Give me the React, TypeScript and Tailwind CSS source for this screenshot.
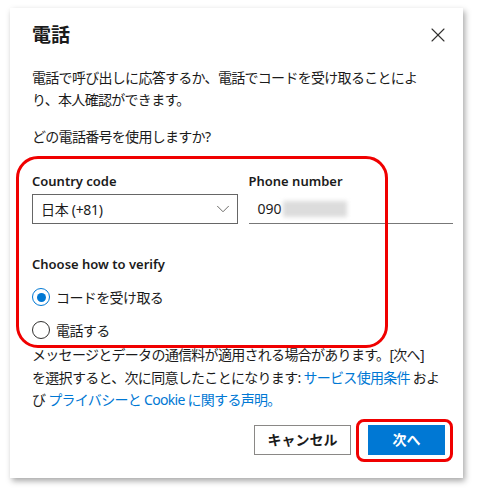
import { X, ChevronDown } from "lucide-react";

const JP = "font-['Noto_Sans','Noto_Sans_CJK_JP',sans-serif]";

function Radio({ checked, label }: { checked?: boolean; label: string }) {
    return (
        <div className="flex items-center h-[24px] gap-[6px]">
            <span
                className={
                    "flex h-[18px] w-[18px] items-center justify-center rounded-full border bg-white " +
                    (checked ? "border-[#0078d4] border-[1.5px]" : "border-[#323130]")
                }
            >
                {checked && <span className="h-[9px] w-[9px] rounded-full bg-[#0078d4]" />}
            </span>
            <span className="text-[14px] tracking-[-0.6px] text-[#1b1b1b]">{label}</span>
        </div>
    );
}

export default function App() {
    return (
        <div className={`relative flow-root h-[490px] w-[481px] bg-white overflow-hidden ${JP}`}>
            {/* dialog card */}
            <div className="ml-[10px] mt-[8px] flow-root h-[470px] w-[453px] bg-white shadow-[2px_3px_6px_rgba(0,0,0,0.35)] pl-[22px] pr-[10px] pt-[15px]">
                <div className="flex h-[24px] items-center justify-between">
                    <h1 className="text-[19px] font-bold leading-[24px] text-[#1b1b1b]">電話</h1>
                    <X className="mr-[3px] h-[24px] w-[24px] text-[#323130]" strokeWidth={1.1} />
                </div>

                <p className="mt-[20px] text-[14px] leading-[22px] tracking-[-0.7px] text-[#1b1b1b]">
                    電話で呼び出しに応答するか、電話でコードを受け取ることによ
                    <br />
                    り、本人確認ができます。
                </p>

                <p className="mt-[15px] text-[14px] leading-[22px] tracking-[-0.7px] text-[#1b1b1b]">
                    どの電話番号を使用しますか?
                </p>

                <div className="mt-[23px] flex gap-[11px]">
                    <div className="w-[206px]">
                        <div className="text-[13px] font-semibold leading-[20px] text-[#1b1b1b]">Country code</div>
                        <div className="mt-[3px] flex h-[30px] items-center justify-between border border-[#666] pl-[8px] pr-[3px]">
                            <span className="text-[14px] tracking-[-0.3px] text-[#1b1b1b]">日本 (+81)</span>
                            <ChevronDown className="h-[22px] w-[22px] text-[#605e5c]" strokeWidth={1} />
                        </div>
                    </div>
                    <div className="w-[205px]">
                        <div className="text-[13px] font-semibold leading-[20px] text-[#1b1b1b]">Phone number</div>
                        <div className="mt-[3px] flex h-[30px] items-center border-b border-[#777] pl-[9px]">
                            <span className="text-[14px] text-[#1b1b1b]">090</span>
                            <span className="ml-[1px] h-[16px] w-[64px] bg-[#dcdcdc] blur-[2px]" />
                        </div>
                    </div>
                </div>

                <div className="mt-[30px] text-[13px] font-semibold leading-[20px] text-[#1b1b1b]">
                    Choose how to verify
                </div>
                <div className="mt-[11px]">
                    <Radio checked label="コードを受け取る" />
                </div>
                <div className="mt-[9px]">
                    <Radio label="電話する" />
                </div>

                <p className="mt-[2px] text-[14px] leading-[22.5px] tracking-[-0.7px] text-[#1b1b1b]">
                    メッセージとデータの通信料が適用される場合があります。[次へ]
                    <br />
                    を選択すると、次に同意したことになります: <span className="text-[#0078d4]">サービス使用条件</span> およ
                    <br />
                    び <span className="text-[#0078d4]">プライバシーと Cookie に関する声明。</span>
                </p>

                <div className="mt-[13px] mr-[8px] flex justify-end gap-[17px]">
                    <button className="h-[30px] w-[97px] border border-[#8a8886] bg-white text-[14px] font-bold text-[#1b1b1b]">
                        キャンセル
                    </button>
                    <button className="h-[30px] w-[77px] bg-[#0078d4] text-[14px] font-bold text-white">
                        次へ
                    </button>
                </div>
            </div>

            {/* red annotation marks */}
            <div className="absolute left-[16px] top-[156px] h-[192px] w-[372px] rounded-[22px] border-[3px] border-[#f00000]" />
            <div className="absolute left-[356px] top-[419px] h-[43px] w-[97px] rounded-[8px] border-[3px] border-[#f00000]" />
        </div>
    );
}
